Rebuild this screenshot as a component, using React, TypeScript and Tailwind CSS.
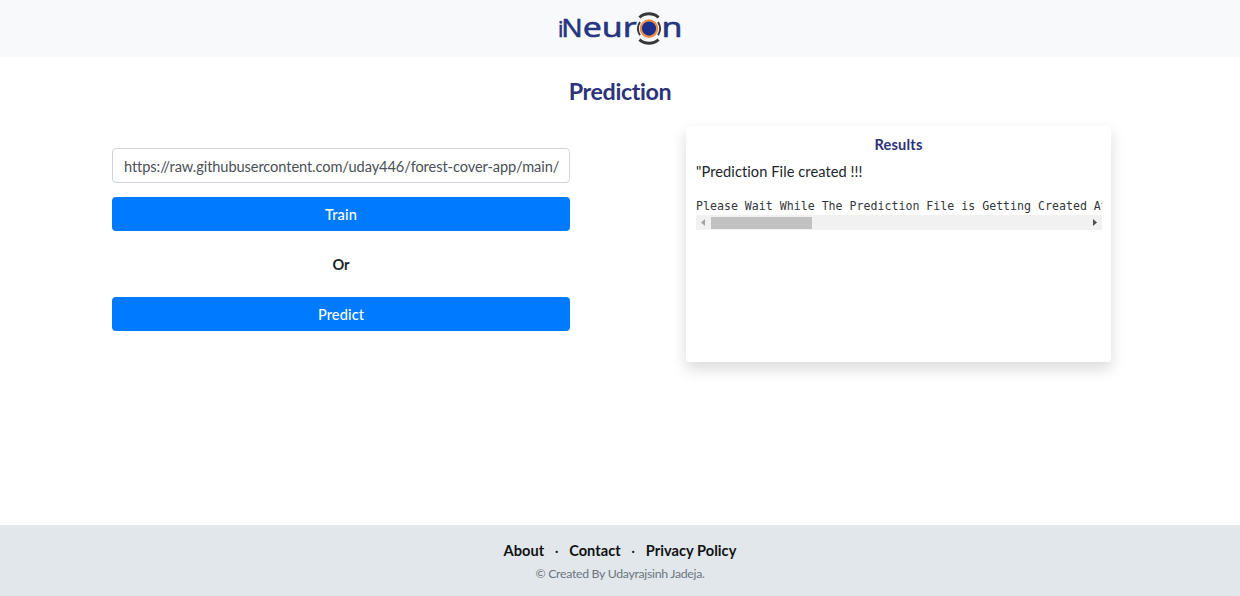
import React from "react";

function Logo() {
  return (
    <svg width="128" height="36" viewBox="556 10 128 36" role="img" aria-label="iNeuron" className="overflow-visible">
      <g fill="#26357f" stroke="#26357f" strokeWidth="0.5" fontFamily="Noto Sans, Open Sans, sans-serif">
        <text x="557.9" y="36.6" fontSize="21">i</text>
        <text x="561.3" y="36.6" fontSize="25.5" textLength="21.5" lengthAdjust="spacingAndGlyphs">N</text>
        <text x="582.7" y="36.6" fontSize="27" textLength="54" lengthAdjust="spacingAndGlyphs">eur</text>
        <text x="661.6" y="36.6" fontSize="27" textLength="21" lengthAdjust="spacingAndGlyphs">n</text>
      </g>
      <circle cx="649" cy="28.6" r="8.2" fill="#1c2f8c" stroke="#ee8c43" strokeWidth="2.2" />
      <g fill="none" stroke="#38383c">
        <path d="M639.4 17.5A14.5 14.5 0 0 1 658.6 17.5M639.4 39.7A14.5 14.5 0 0 0 658.6 39.7" strokeWidth="3" />
        <path d="M640 22A12.3 12.3 0 0 0 640 35.2M658 22A12.3 12.3 0 0 1 658 35.2" strokeWidth="1.9" />
      </g>
    </svg>
  );
}

function ActionButton({ label }: { label: string }) {
  return (
    <button className="block h-[34px] w-full rounded-[4px] bg-[#007bff] pt-px text-[14.6px] leading-[34px] font-medium tracking-[0.1px] text-white">
      {label}
    </button>
  );
}

function ResultsCard() {
  return (
    <section className="h-[236px] w-[425px] rounded-[4px] bg-white px-[10px] pt-[9px] shadow-[0_7px_15px_rgba(0,0,0,0.15)]">
      <h2 className="text-center text-[14.6px] leading-5 font-bold tracking-[0.2px] text-[#2d3279]">Results</h2>
      <p className="mt-[6px] text-[14.6px] leading-[22px] tracking-[0.08px] text-[#212529]">"Prediction File created !!!</p>
      <div className="mt-[14px] w-[406px]">
        <pre className="h-[18px] overflow-hidden font-['DejaVu_Sans_Mono',monospace] text-[11.6px] leading-[18px] text-[#33373b]">
          Please Wait While The Prediction File is Getting Created At
        </pre>
        <div className="flex h-[15px] items-center justify-between bg-[#f1f1f1] px-[5px]">
          <div className="flex items-center gap-[6px]">
            <svg width="4" height="7" viewBox="0 0 4 7"><path d="M4 0v7L0 3.5z" fill="#a3a3a3" /></svg>
            <div className="h-3 w-[101px] bg-[#c1c1c1]" />
          </div>
          <svg width="4" height="7" viewBox="0 0 4 7"><path d="M0 0v7L4 3.5z" fill="#505050" /></svg>
        </div>
      </div>
    </section>
  );
}

export default function App() {
  return (
    <div className="flex h-[596px] w-full flex-col overflow-hidden bg-white font-['Lato',sans-serif] [font-variant-ligatures:none]">
      <header className="flex h-[57px] shrink-0 justify-center bg-[#f8f9fa] pt-[10px]">
        <Logo />
      </header>
      <main className="flex-1">
        <h1 className="pt-[19px] text-center text-[23.3px] leading-[30px] font-bold tracking-[-0.4px] text-[#2d3279]">
          Prediction
        </h1>
        <div className="flex items-start gap-[116px] pt-5 pl-[112px]">
          <form className="mt-[22px] w-[458px]" onSubmit={(e) => e.preventDefault()}>
            <input
              aria-label="File path"
              defaultValue="https://raw.githubusercontent.com/uday446/forest-cover-app/main/"
              className="block h-[35px] w-full rounded-[4px] border border-[#ced4da] pt-[2px] pr-[9px] pl-[11px] text-[14.6px] tracking-[-0.08px] text-[#495057] outline-none"
            />
            <div className="mt-[14px]"><ActionButton label="Train" /></div>
            <p className="mt-[23px] mb-[21px] text-center text-[14.6px] leading-[22px] font-bold text-[#212529]">Or</p>
            <ActionButton label="Predict" />
          </form>
          <ResultsCard />
        </div>
      </main>
      <footer className="h-[71px] shrink-0 bg-[#e2e7eb] pt-[15px] text-center">
        <nav className="flex justify-center gap-[10.5px] text-[14.6px] leading-[22px] font-bold tracking-[0.05px] text-[#101214]">
          <a>About</a><span className="font-normal">·</span><a>Contact</a><span className="font-normal">·</span><a>Privacy Policy</a>
        </nav>
        <p className="mt-[3px] text-[12.3px] leading-[18px] tracking-[-0.3px] text-[#6c757d]">© Created By Udayrajsinh Jadeja.</p>
      </footer>
    </div>
  );
}
